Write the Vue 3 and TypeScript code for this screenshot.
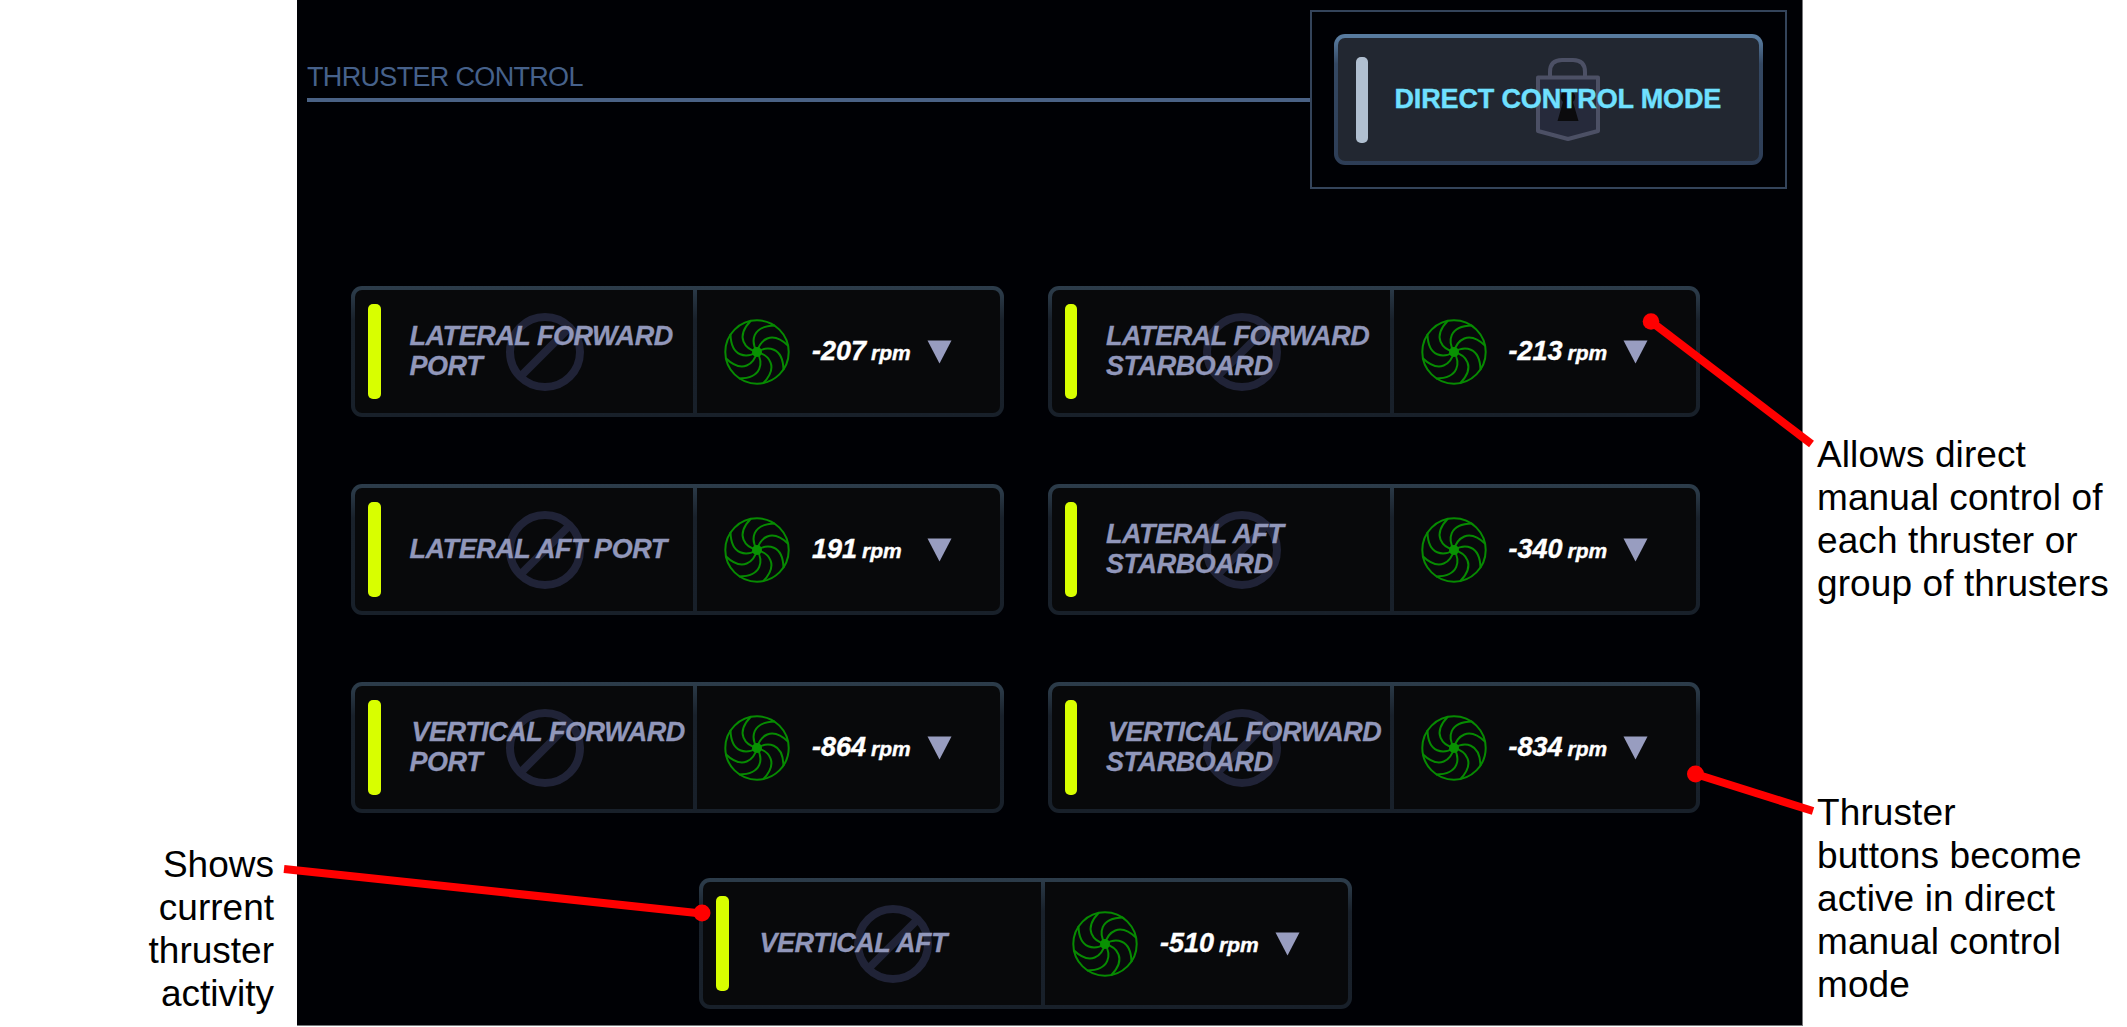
<script setup lang="ts">
interface Thruster {
  name: string[]
  rpm: number
}

const rows: Thruster[][] = [
  [
    { name: ['LATERAL FORWARD', 'PORT'], rpm: -207 },
    { name: ['LATERAL FORWARD', 'STARBOARD'], rpm: -213 },
  ],
  [
    { name: ['LATERAL AFT PORT'], rpm: 191 },
    { name: ['LATERAL AFT', 'STARBOARD'], rpm: -340 },
  ],
  [
    { name: ['VERTICAL FORWARD', 'PORT'], rpm: -864 },
    { name: ['VERTICAL FORWARD', 'STARBOARD'], rpm: -834 },
  ],
  [{ name: ['VERTICAL AFT'], rpm: -510 }],
]

const bladeCount = 8
const blades = Array.from({ length: bladeCount }, (_, i) => (i * 360) / bladeCount)
</script>

<template>
  <div class="page">
    <aside class="notes-left">
      <p class="note">Shows<br />current<br />thruster<br />activity</p>
    </aside>

    <main class="panel">
      <header class="head">
        <div class="title">THRUSTER CONTROL</div>
        <div class="mode-frame">
          <div class="mode-button">
            <span class="mode-bar"></span>
            <svg class="lock" width="66" height="84" viewBox="0 0 66 84">
              <path d="M15 20V15Q15 3 27 3H38Q50 3 50 15V20" fill="none" stroke="#4c5065" stroke-width="4" />
              <path d="M3 20.500H63V74L33 82L3 74Z" fill="#262a3b" stroke="#4c5065" stroke-width="4" stroke-linejoin="round" />
              <path d="M33 33a7 7 0 0 1 5 12L43.500 64H22.500L28 45A7 7 0 0 1 33 33Z" fill="#0b0b0d" />
            </svg>
            <span class="mode-text">DIRECT CONTROL MODE</span>
          </div>
        </div>
      </header>

      <section class="rows">
        <div v-for="(row, r) in rows" :key="r" class="row">
          <article v-for="t in row" :key="t.name.join(' ')" class="card">
            <div class="label-cell">
              <span class="status"></span>
              <svg class="blocked" width="80" height="80" viewBox="0 0 80 80">
                <g fill="none" stroke="#202337" stroke-width="8">
                  <circle cx="40" cy="40" r="35" />
                  <path d="M16 64L64 16" />
                </g>
              </svg>
              <div class="name">
                <div
                  v-for="line in t.name"
                  :key="line"
                  :class="{ indented: line.startsWith('V') }"
                >{{ line }}</div>
              </div>
            </div>
            <div class="value-cell">
              <svg class="fan" width="68" height="68" viewBox="-34 -34 68 68">
                <g fill="none" stroke="#078a02" stroke-width="2">
                  <circle r="31.700" />
                  <path
                    v-for="a in blades"
                    :key="a"
                    d="M0 0C-6 -10 -6 -26 18 -26.500"
                    :transform="`rotate(${a})`"
                  />
                </g>
                <circle r="5" fill="#089202" />
              </svg>
              <div class="rpm">{{ t.rpm }}<span class="unit">rpm</span></div>
              <svg class="arrow" width="25" height="24" viewBox="0 0 25 24">
                <path d="M0.500 0.500H24.500L12.500 23.500Z" fill="#989dc0" />
              </svg>
            </div>
          </article>
        </div>
      </section>
    </main>

    <aside class="notes-right">
      <p class="note">Allows direct<br />manual control of<br />each thruster or<br />group of thrusters</p>
      <p class="note">Thruster<br />buttons become<br />active in direct<br />manual control<br />mode</p>
    </aside>

    <svg class="pointers" width="2127" height="1027" viewBox="0 0 2127 1027">
      <g stroke="#ff0000" stroke-width="8" fill="#ff0000">
        <path d="M1651 321.500L1811.500 444" />
        <path d="M1695.500 774L1813 811" />
        <path d="M284 869L701.500 913.500" />
      </g>
      <g fill="#ff0000">
        <circle cx="1651" cy="321.500" r="8.300" />
        <circle cx="1695.500" cy="774" r="8.500" />
        <circle cx="702" cy="913" r="8.500" />
      </g>
    </svg>
  </div>
</template>

<style>
body {
  margin: 0;
  background: #fff;
}
</style>

<style scoped>
.page {
  position: relative;
  display: flex;
  width: 2127px;
  height: 1027px;
  overflow: hidden;
  background: #fff;
  font-family: 'Liberation Sans', Arial, sans-serif;
}

.notes-left {
  box-sizing: border-box;
  width: 297px;
  padding: 843px 23px 0 0;
  text-align: right;
}

.notes-right {
  flex: 1;
  padding: 433px 0 0 14px;
}

.note {
  margin: 0;
  font-size: 37px;
  line-height: 43px;
  letter-spacing: 0.1px;
  color: #000;
  white-space: nowrap;
}

.notes-left .note {
  letter-spacing: 0;
}

.notes-right .note + .note {
  margin-top: 186px;
}

.panel {
  box-sizing: border-box;
  width: 1506px;
  height: 1026px;
  border-right: 1px solid #77787b;
  border-bottom: 1px solid #77787b;
  background: #000105;
}

.head {
  display: flex;
  padding: 10px 0 0 10px;
}

.title {
  box-sizing: border-box;
  width: 1003px;
  height: 92px;
  padding-top: 50px;
  border-bottom: 4px solid #4a6285;
  font-size: 27px;
  line-height: 34px;
  letter-spacing: -0.67px;
  color: #46618b;
}

.mode-frame {
  box-sizing: border-box;
  width: 477px;
  height: 179px;
  padding: 22px;
  border: 2px solid #34445b;
}

.mode-button {
  position: relative;
  box-sizing: border-box;
  display: flex;
  align-items: center;
  width: 429px;
  height: 131px;
  padding-left: 18px;
  border: 4px solid transparent;
  border-radius: 11px;
  background:
    linear-gradient(#222731, #222731) padding-box,
    linear-gradient(#587b9f 0, #587b9f 4px, #344863 30px, #2d3d56 100%) border-box;
}

.mode-bar {
  width: 12px;
  height: 86px;
  margin-top: 1px;
  border-radius: 5px;
  background: #b0bfd0;
}

.lock {
  position: absolute;
  left: 197px;
  top: 19px;
}

.mode-text {
  position: relative;
  margin-left: 26.500px;
  padding-bottom: 1px;
  font-size: 27px;
  font-weight: bold;
  letter-spacing: -0.15px;
  color: #6fe0ff;
  -webkit-text-stroke: 0.4px #6fe0ff;
  white-space: nowrap;
}

.rows {
  display: flex;
  flex-direction: column;
  gap: 67px;
  padding: 97px 0 0 54px;
}

.row {
  display: flex;
  gap: 44px;
}

.row:last-child {
  margin: -2px 0 0 348px;
}

.card {
  box-sizing: border-box;
  display: flex;
  width: 652.500px;
  height: 131px;
  border: 4px solid transparent;
  border-radius: 11px;
  background:
    linear-gradient(#08090b, #08090b) padding-box,
    linear-gradient(#2c3c4b 0, #2a3947 8px, #19212b 34px, #18202a 100%) border-box;
}

.label-cell {
  position: relative;
  box-sizing: border-box;
  display: flex;
  align-items: center;
  width: 338px;
  padding-left: 13px;
}

.status {
  width: 12.500px;
  height: 95px;
  border-radius: 5px;
  background: #d8ff00;
}

.blocked {
  position: absolute;
  left: 150px;
  top: 22px;
}

.name {
  position: relative;
  margin-left: 29px;
  padding-bottom: 1px;
  font-size: 27px;
  font-weight: bold;
  font-style: italic;
  line-height: 30.500px;
  letter-spacing: -0.45px;
  color: #9197ba;
  -webkit-text-stroke: 0.3px #9197ba;
  white-space: nowrap;
}

.indented {
  padding-left: 2px;
}

.value-cell {
  flex: 1;
  display: flex;
  align-items: center;
  border-left: 4px solid;
  border-image: linear-gradient(#2a3947 0, #19212b 30px, #18202a 100%) 1;
  border-image-width: 0 0 0 4px;
}

.fan {
  margin-left: 26px;
}

.rpm {
  width: 114px;
  margin-left: 21px;
  font-size: 27px;
  font-weight: bold;
  font-style: italic;
  color: #fff;
  -webkit-text-stroke: 0.4px #fff;
  white-space: nowrap;
}

.unit {
  margin-left: 5px;
  font-size: 21px;
}

.arrow {
  margin-left: 0.500px;
}

.pointers {
  position: absolute;
  left: 0;
  top: 0;
}
</style>
